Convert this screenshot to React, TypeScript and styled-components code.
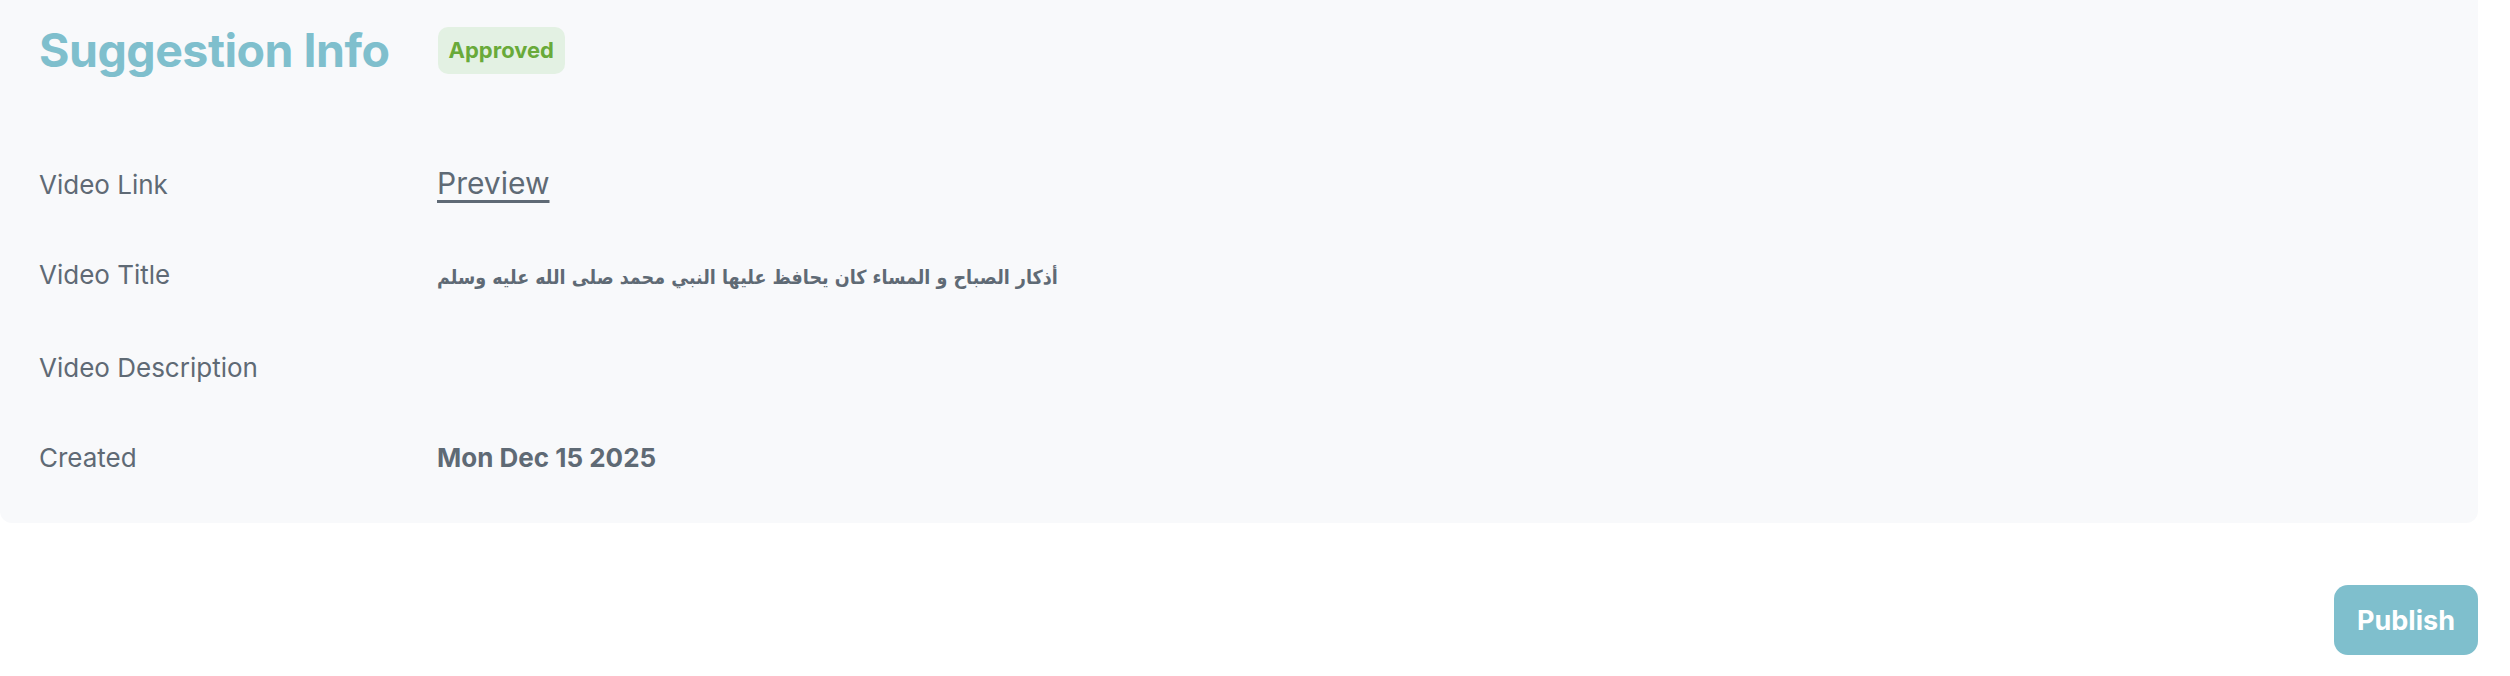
import React from "react";
import styled, { createGlobalStyle } from "styled-components";

const GlobalStyle = createGlobalStyle`
  body {
    margin: 0;
    background: #ffffff;
    font-family: "Inter", "DejaVu Sans", sans-serif;
  }
`;

interface InfoRow {
  label: string;
  value?: string;
  kind?: "link" | "text" | "rtl";
}

const ROWS: InfoRow[] = [
  { label: "Video Link", value: "Preview", kind: "link" },
  {
    label: "Video Title",
    value: "أذكار الصباح و المساء كان يحافظ عليها النبي محمد صلى الله عليه وسلم",
    kind: "rtl",
  },
  { label: "Video Description" },
  { label: "Created", value: "Mon Dec 15 2025", kind: "text" },
];

const App: React.FC = () => {
  return (
    <>
      <GlobalStyle />
      <Page>
        <Panel>
          <Header>
            <Title>Suggestion Info</Title>
            <Badge>Approved</Badge>
          </Header>
          <RowList>
            {ROWS.map((row) => (
              <Row key={row.label}>
                <Label>{row.label}</Label>
                {row.kind === "link" && <PreviewLink href="#">{row.value}</PreviewLink>}
                {row.kind === "rtl" && <ArabicValue dir="rtl">{row.value}</ArabicValue>}
                {row.kind === "text" && <Value>{row.value}</Value>}
                {!row.kind && <Value />}
              </Row>
            ))}
          </RowList>
        </Panel>
        <Actions>
          <PublishButton>Publish</PublishButton>
        </Actions>
      </Page>
    </>
  );
};

export const Page = styled.div`
  padding-right: 32px;
`;

export const Panel = styled.section`
  background: #f8f9fb;
  border-radius: 0 0 12px 12px;
  padding: 21px 39px 20px;
`;

export const Header = styled.div`
  display: flex;
  align-items: center;
  gap: 48px;
`;

export const Title = styled.h2`
  margin: 0;
  font-size: 46.5px;
  line-height: 58px;
  font-weight: 700;
  color: #7fbfcd;
  letter-spacing: -0.5px;
`;

export const Badge = styled.span`
  display: inline-flex;
  align-items: center;
  height: 47px;
  padding: 0 11px;
  border-radius: 10px;
  background: #e3f1e3;
  color: #69aa3a;
  font-size: 22px;
  font-weight: 700;
`;

export const RowList = styled.div`
  margin-top: 59px;
`;

export const Row = styled.div`
  display: grid;
  grid-template-columns: 398px 1fr;
  align-items: baseline;
  padding: 25px 0;
  line-height: 40px;
`;

export const Label = styled.span`
  font-size: 26px;
  color: #5f6a75;
`;

export const Value = styled.span`
  font-size: 26px;
  font-weight: 700;
  color: #5f6a75;
`;

export const ArabicValue = styled.span`
  justify-self: start;
  font-family: "DejaVu Sans Condensed", "DejaVu Sans", sans-serif;
  font-stretch: condensed;
  font-size: 19.5px;
  font-weight: 700;
  color: #5f6a75;
`;

export const PreviewLink = styled.a`
  justify-self: start;
  font-size: 30px;
  color: #5f6a75;
  text-decoration: underline;
  text-underline-offset: 6px;
  text-decoration-thickness: 3px;
`;

export const Actions = styled.div`
  display: flex;
  justify-content: flex-end;
  margin-top: 62px;
`;

export const PublishButton = styled.button`
  width: 144px;
  height: 70px;
  border: none;
  border-radius: 14px;
  background: #7fbfcd;
  color: #ffffff;
  font-family: "Inter", sans-serif;
  font-size: 27px;
  font-weight: 700;
  cursor: pointer;
`;

export default App;
